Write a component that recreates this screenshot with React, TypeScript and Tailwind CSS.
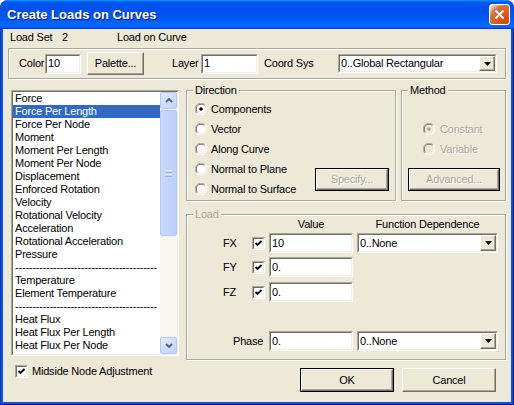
import React from 'react';

const FACE = 'bg-[#ECE9D8]';
const SUNK_OUT = 'border border-t-[#ACA899] border-l-[#ACA899] border-b-white border-r-white';
const SUNK_IN = 'border border-t-[#716F64] border-l-[#716F64] border-b-[#F1EFE2] border-r-[#F1EFE2]';
const ETCHED = 'border border-[#ACA899] shadow-[inset_1px_1px_0_#fff,1px_1px_0_#fff]';

const LIST = [
  'Force',
  'Force Per Length',
  'Force Per Node',
  'Moment',
  'Moment Per Length',
  'Moment Per Node',
  'Displacement',
  'Enforced Rotation',
  'Velocity',
  'Rotational Velocity',
  'Acceleration',
  'Rotational Acceleration',
  'Pressure',
  '-',
  'Temperature',
  'Element Temperature',
  '-',
  'Heat Flux',
  'Heat Flux Per Length',
  'Heat Flux Per Node',
  'Heat Generation',
];

function TextBox({ value, className = '' }: { value: string; className?: string }) {
  return (
    <div className={`${SUNK_OUT} ${className}`}>
      <div className={`${SUNK_IN} h-full bg-white flex items-center pl-[1px]`}>{value}</div>
    </div>
  );
}

function Arrow() {
  return (
    <div className={`${FACE} w-[16px] h-full flex items-center justify-center border border-t-white border-l-white border-b-[#716F64] border-r-[#716F64] shadow-[inset_-1px_-1px_0_#ACA899]`}>
      <svg width="7" height="4" viewBox="0 0 7 4">
        <polygon points="0,0 7,0 3.5,4" fill="#000" />
      </svg>
    </div>
  );
}

function Combo({ value, className = '' }: { value: string; className?: string }) {
  return (
    <div className={`${SUNK_OUT} ${className}`}>
      <div className={`${SUNK_IN} h-full bg-white flex items-center`}>
        <span className="flex-1 pl-[1px] whitespace-nowrap">{value}</span>
        <Arrow />
      </div>
    </div>
  );
}

function Btn({
  children,
  className = '',
  disabled = false,
  frame = false,
}: {
  children: React.ReactNode;
  className?: string;
  disabled?: boolean;
  frame?: boolean;
}) {
  const face = (
    <div
      className={`${FACE} w-full h-full flex items-center justify-center border border-t-white border-l-white border-b-[#716F64] border-r-[#716F64] shadow-[inset_-1px_-1px_0_#ACA899] ${
        disabled ? 'text-[#ACA899] [text-shadow:1px_1px_0_#fff]' : ''
      }`}
    >
      {children}
    </div>
  );
  if (!frame) return <div className={className}>{face}</div>;
  return <div className={`border border-black ${className}`}>{face}</div>;
}

function Check({ checked = true }: { checked?: boolean }) {
  return (
    <div className={`${SUNK_OUT} w-[13px] h-[13px] shrink-0`}>
      <div className={`${SUNK_IN} w-full h-full bg-white flex items-center justify-center`}>
        {checked && (
          <svg width="9" height="9" viewBox="0 0 9 9">
            <polyline points="1.5,4 3.5,6 7.5,2" fill="none" stroke="#000" strokeWidth="1.8" />
          </svg>
        )}
      </div>
    </div>
  );
}

function Radio({ checked = false, disabled = false }: { checked?: boolean; disabled?: boolean }) {
  return (
    <svg width="12" height="12" viewBox="0 0 12 12" className="shrink-0">
      <path d="M1.8 10.2 A5.9 5.9 0 0 1 10.2 1.8" stroke="#ACA899" fill="none" />
      <path d="M10.2 1.8 A5.9 5.9 0 0 1 1.8 10.2" stroke="#fff" fill="none" />
      <path d="M2.6 9.4 A4.8 4.8 0 0 1 9.4 2.6" stroke="#716F64" fill="none" />
      <path d="M9.4 2.6 A4.8 4.8 0 0 1 2.6 9.4" stroke="#F1EFE2" fill="none" />
      <circle cx="6" cy="6" r="4" fill={disabled ? '#ECE9D8' : '#fff'} />
      {checked && <circle cx="6" cy="6" r="1.8" fill={disabled ? '#ACA899' : '#000'} />}
    </svg>
  );
}

function Group({
  label,
  className = '',
  muted = false,
  children,
}: {
  label: string;
  className?: string;
  muted?: boolean;
  children: React.ReactNode;
}) {
  return (
    <div className={`relative ${ETCHED} ${className}`}>
      <span className={`absolute -top-[7px] left-[6px] px-[2px] leading-[13px] ${FACE} ${muted ? 'text-[#ACA899]' : ''}`}>
        {label}
      </span>
      {children}
    </div>
  );
}

function ScrollBtn({ up }: { up?: boolean }) {
  return (
    <div className="h-[17px] w-[17px] rounded-[2px] border border-[#B4C8F6] bg-[linear-gradient(135deg,#E1EAFE,#C1D3FB)] flex items-center justify-center">
      <svg width="8" height="5" viewBox="0 0 8 5">
        <polyline
          points={up ? '1,4 4,1 7,4' : '1,1 4,4 7,1'}
          fill="none"
          stroke="#4D6185"
          strokeWidth="1.8"
        />
      </svg>
    </div>
  );
}

function ScrollBar() {
  return (
    <div className="w-[17px] h-full flex flex-col bg-[#F7F6F1]">
      <ScrollBtn up />
      <div className="mt-[1px] h-[126px] rounded-[2px] border border-[#B4C8F6] bg-[linear-gradient(90deg,#CAD8FC,#BCD0FB)] flex flex-col items-center justify-center gap-[1px]">
        <div className="w-[7px] h-[1px] bg-[#EEF4FE]" />
        <div className="w-[7px] h-[1px] bg-[#8CB0F8]" />
        <div className="w-[7px] h-[1px] bg-[#EEF4FE]" />
        <div className="w-[7px] h-[1px] bg-[#8CB0F8]" />
      </div>
      <div className="flex-1" />
      <ScrollBtn />
    </div>
  );
}

export default function App() {
  return (
    <div className="w-[514px] h-[405px] bg-white text-[11px] leading-[13px] text-black font-['Liberation_Sans',Arial,sans-serif] tracking-[-0.2px]">
      <div className="w-full h-full rounded-t-[8px] overflow-hidden flex flex-col bg-[#0855DD]">
        {/* title bar */}
        <div className="h-[29px] shrink-0 flex items-center pl-[7px] pr-[4px] bg-[linear-gradient(180deg,#0997ff,#0053ee_8%,#0050ee_40%,#0066ff_88%,#0066ff_93%,#005bff_95%,#003dd7_96%,#003dd7)]">
          <span className="flex-1 text-[13px] font-bold text-white tracking-[0px] [text-shadow:1px_1px_0_#0A1883]">
            Create Loads on Curves
          </span>
          <div className="w-[21px] h-[21px] rounded-[3px] border border-white bg-[radial-gradient(circle_at_90%_90%,#cc4600_0%,#dc6527_55%,#cd7546_70%,#ffccb2_90%,#fff_100%)] flex items-center justify-center">
            <svg width="11" height="11" viewBox="0 0 11 11">
              <path d="M1.5 1.5 L9.5 9.5 M9.5 1.5 L1.5 9.5" stroke="#fff" strokeWidth="2" />
            </svg>
          </div>
        </div>

        {/* client */}
        <div className="flex-1 px-[3px] pb-[3px] shadow-[inset_-1px_-1px_#00138c,inset_1px_0_#0831d9]">
          <div className={`h-full ${FACE} flex flex-col pt-[2px]`}>
            <div className="flex h-[13px] pl-[7px]">
              <span className="w-[52px]">Load Set</span>
              <span className="w-[55px]">2</span>
              <span>Load on Curve</span>
            </div>

            <div className={`mt-[4px] ml-[5px] w-[498px] h-[31px] ${ETCHED} flex items-center pl-[10px]`}>
              <span className="w-[26px]">Color</span>
              <TextBox value="10" className="w-[36px] h-[20px]" />
              <Btn className="ml-[6px] w-[57px] h-[23px]">Palette...</Btn>
              <span className="ml-[28px] w-[29px]">Layer</span>
              <TextBox value="1" className="w-[57px] h-[20px]" />
              <span className="ml-[6px] w-[74px]">Coord Sys</span>
              <Combo value="0..Global Rectangular" className="w-[159px] h-[19px]" />
            </div>

            <div className="mt-[11px] flex">
              {/* left column */}
              <div className="ml-[8px] w-[168px]">
                <div className={`${SUNK_OUT} h-[266px]`}>
                  <div className={`${SUNK_IN} h-full flex`}>
                    <div className="flex-1 bg-white overflow-hidden">
                      {LIST.map((item, i) =>
                        item === '-' ? (
                          <div key={i} className="h-[13px] pl-[2px] whitespace-nowrap">
                            {'-'.repeat(41)}
                          </div>
                        ) : (
                          <div
                            key={i}
                            className={`h-[13px] pl-[2px] whitespace-nowrap ${
                              i === 1 ? 'bg-[#316AC5] text-white' : ''
                            }`}
                          >
                            {item}
                          </div>
                        )
                      )}
                    </div>
                    <ScrollBar />
                  </div>
                </div>
                <div className="mt-[9px] h-[13px] flex items-center pl-[4px] gap-[4px]">
                  <Check />
                  <span>Midside Node Adjustment</span>
                </div>
              </div>

              {/* right column */}
              <div className="ml-[7px] w-[320px]">
                <div className="flex">
                  <Group label="Direction" className="w-[210px] h-[111px]">
                    <div className="flex h-full">
                      <div className="pt-[8px] pl-[8px]">
                        {['Components', 'Vector', 'Along Curve', 'Normal to Plane', 'Normal to Surface'].map((r, i) => (
                          <div key={r} className="h-[20px] flex items-center gap-[4px]">
                            <Radio checked={i === 0} />
                            <span>{r}</span>
                          </div>
                        ))}
                      </div>
                      <Btn disabled frame className="ml-auto self-end mb-[9px] mr-[6px] w-[74px] h-[23px]">
                        Specify...
                      </Btn>
                    </div>
                  </Group>
                  <Group label="Method" className="ml-[5px] w-[105px] h-[111px]">
                    <div className="pt-[28px] pl-[21px] text-[#ACA899]">
                      <div className="h-[20px] flex items-center gap-[5px]">
                        <Radio checked disabled />
                        <span className="[text-shadow:1px_1px_0_#fff]">Constant</span>
                      </div>
                      <div className="h-[20px] flex items-center gap-[5px]">
                        <Radio disabled />
                        <span className="[text-shadow:1px_1px_0_#fff]">Variable</span>
                      </div>
                    </div>
                    <Btn disabled frame className="mt-[9px] ml-[6px] w-[92px] h-[23px]">
                      Advanced...
                    </Btn>
                  </Group>
                </div>

                <Group label="Load" muted className="mt-[13px] h-[146px]">
                  <div className="pt-[3px]">
                    <div className="flex h-[13px]">
                      <span className="w-[82px]" />
                      <span className="w-[84px] text-center">Value</span>
                      <span className="ml-[4px] w-[141px] text-center">Function Dependence</span>
                    </div>
                    {[
                      { k: 'FX', v: '10', mt: 'mt-[2px]' },
                      { k: 'FY', v: '0.', mt: 'mt-[4px]' },
                      { k: 'FZ', v: '0.', mt: 'mt-[5px]' },
                    ].map((row) => (
                      <div key={row.k} className={`${row.mt} h-[20px] flex items-center pl-[36px]`}>
                        <span className="w-[29px]">{row.k}</span>
                        <Check />
                        <TextBox value={row.v} className="ml-[4px] w-[84px] h-[20px]" />
                        {row.k === 'FX' && <Combo value="0..None" className="ml-[4px] w-[141px] h-[20px]" />}
                      </div>
                    ))}
                    <div className="mt-[29px] h-[20px] flex items-center pl-[46px]">
                      <span className="w-[36px]">Phase</span>
                      <TextBox value="0." className="w-[84px] h-[20px]" />
                      <Combo value="0..None" className="ml-[4px] w-[141px] h-[20px]" />
                    </div>
                  </div>
                </Group>

                <div className="mt-[8px] flex pl-[114px] gap-[8px]">
                  <Btn frame className="w-[94px] h-[24px]">OK</Btn>
                  <Btn className="w-[94px] h-[24px]">Cancel</Btn>
                </div>
              </div>
            </div>
          </div>
        </div>
      </div>
    </div>
  );
}
